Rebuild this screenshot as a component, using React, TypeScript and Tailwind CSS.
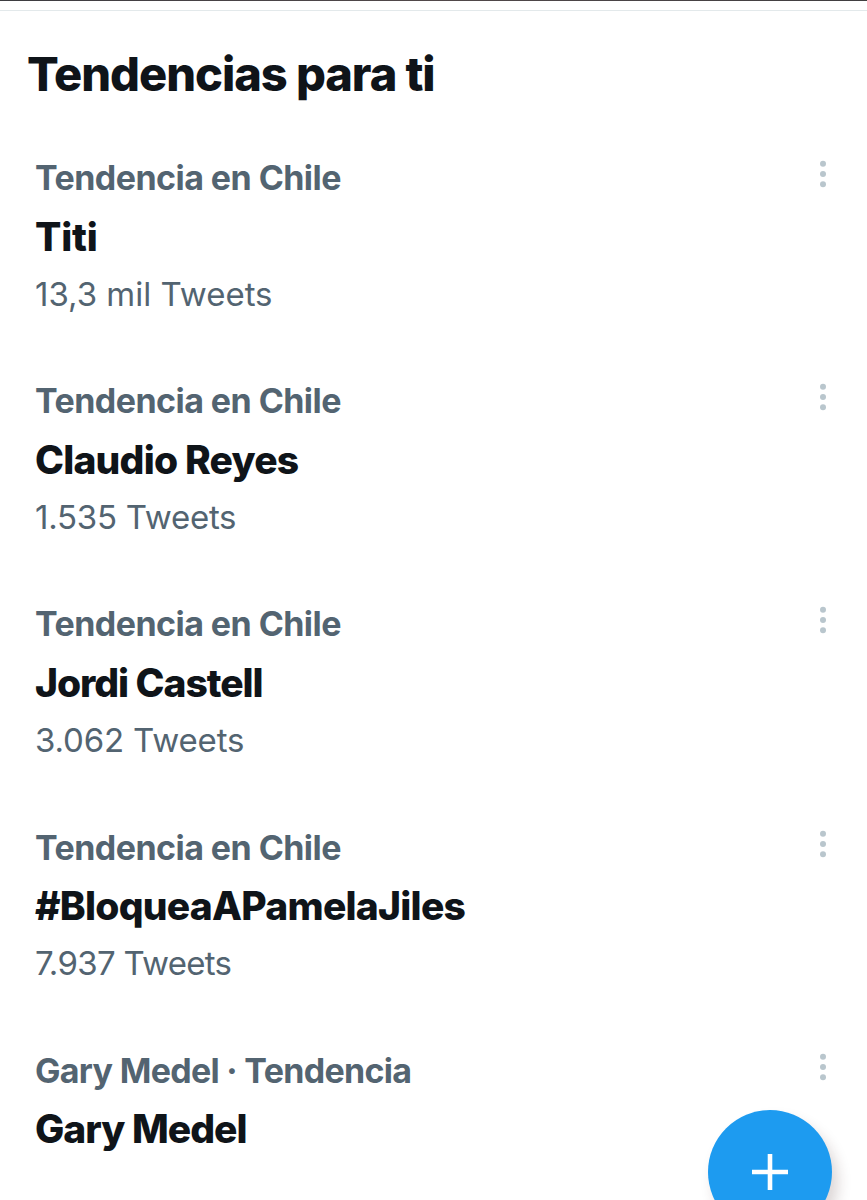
import clsx from 'clsx';

interface Trend {
  label: string;
  labelClass: string;
  name: string;
  nameClass: string;
  count?: string;
  countClass?: string;
}

const trends: Trend[] = [
  {
    label: 'Tendencia en Chile',
    labelClass: 'tracking-[-0.55px]',
    name: 'Titi',
    nameClass: 'tracking-[-0.2px]',
    count: '13,3 mil Tweets',
    countClass: 'tracking-[0px]',
  },
  {
    label: 'Tendencia en Chile',
    labelClass: 'tracking-[-0.55px]',
    name: 'Claudio Reyes',
    nameClass: 'tracking-[-0.8px]',
    count: '1.535 Tweets',
    countClass: 'tracking-[-0.25px]',
  },
  {
    label: 'Tendencia en Chile',
    labelClass: 'tracking-[-0.55px]',
    name: 'Jordi Castell',
    nameClass: 'tracking-[-1.05px]',
    count: '3.062 Tweets',
    countClass: 'tracking-[-0.15px]',
  },
  {
    label: 'Tendencia en Chile',
    labelClass: 'tracking-[-0.55px]',
    name: '#BloqueaAPamelaJiles',
    nameClass: 'tracking-[-0.75px]',
    count: '7.937 Tweets',
    countClass: 'tracking-[-0.7px]',
  },
  {
    label: 'Gary Medel · Tendencia',
    labelClass: 'tracking-[-0.7px]',
    name: 'Gary Medel',
    nameClass: 'tracking-[-1px]',
  },
];

const MoreIcon = () => (
  <svg width="10" height="30" viewBox="0 0 10 30" fill="#b9c6cd">
    <circle cx="5" cy="4.8" r="3" />
    <circle cx="5" cy="15" r="3" />
    <circle cx="5" cy="25.2" r="3" />
  </svg>
);

const TrendItem = ({ trend }: { trend: Trend }) => (
  <li className="flex h-[223.2px] shrink-0 items-start justify-between pr-[39px] pl-[35px]">
    <div className="whitespace-nowrap">
      <p
        className={clsx(
          'h-[58.5px] text-[34px] leading-[58px] font-bold text-[#536471]',
          trend.labelClass
        )}
      >
        {trend.label}
      </p>
      <p
        className={clsx(
          'h-[57.3px] text-[39px] leading-[58px] font-extrabold text-[#0f1419]',
          trend.nameClass
        )}
      >
        {trend.name}
      </p>
      {trend.count && (
        <p
          className={clsx(
            'h-[58px] text-[33px] leading-[58px] font-normal text-[#536471]',
            trend.countClass
          )}
        >
          {trend.count}
        </p>
      )}
    </div>
    <button type="button" aria-label="Más opciones" className="mt-2.5">
      <MoreIcon />
    </button>
  </li>
);

export default function App() {
  return (
    <div className="relative flex h-[1200px] w-[867px] flex-col overflow-hidden bg-white font-['Inter','Liberation_Sans',sans-serif]">
      {/* bottom edge of the media above the list */}
      <div className="h-px shrink-0 bg-linear-to-r from-[#3d3c40] via-[#51484a] to-[#403e40]" />
      <div className="h-2.5 shrink-0 border-b border-[#e3e9eb]" />

      <h1 className="mt-[33px] mb-[45px] h-[60px] shrink-0 pl-[27px] text-[47px] leading-[60px] font-extrabold tracking-[-1.05px] whitespace-nowrap text-[#0f1419]">
        Tendencias para ti
      </h1>

      <ul className="flex flex-col">
        {trends.map((trend) => (
          <TrendItem key={trend.name} trend={trend} />
        ))}
      </ul>

      <button
        type="button"
        aria-label="Twittear"
        className="absolute top-[1110px] left-[708px] flex size-[124px] items-center justify-center rounded-full bg-[#1d9bf0] shadow-[6px_10px_14px_rgba(60,30,30,0.18)]"
      >
        <svg width="36" height="36" viewBox="0 0 36 36" stroke="#fff" strokeWidth="4.6">
          <path d="M18 0v36M0 18h36" />
        </svg>
      </button>
    </div>
  );
}
